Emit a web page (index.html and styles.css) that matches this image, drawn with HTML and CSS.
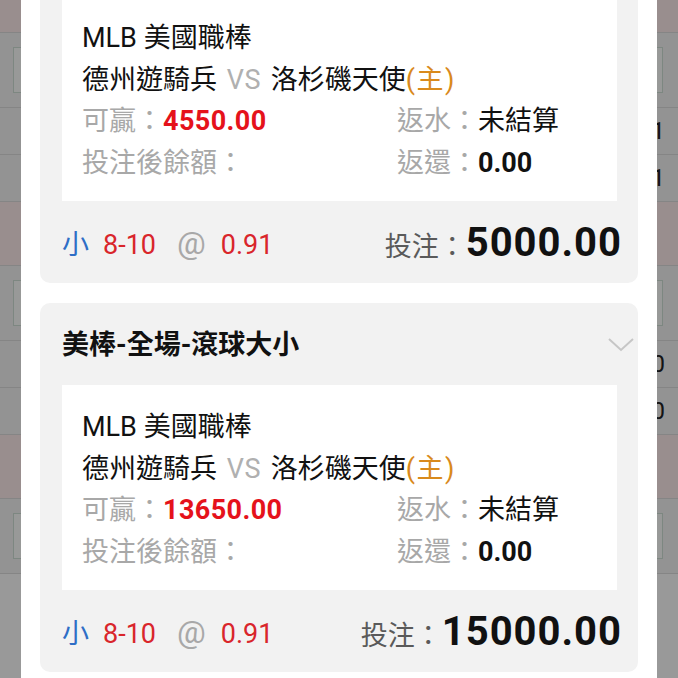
FILE: index.html
```html
<!DOCTYPE html>
<html lang="zh-Hant">
<head>
<meta charset="UTF-8" />
<meta name="viewport" content="width=device-width, initial-scale=1" />
<title>注單明細</title>
<link rel="stylesheet" href="styles.css">
</head>
<body>
  <!-- page behind the dialog -->
  <div class="page">
    <div class="group">
      <div class="row row-title"></div>
      <div class="row row-input"><div class="input"></div></div>
      <div class="row row-num"><span>1</span></div>
      <div class="row row-num"><span>1</span></div>
    </div>
    <div class="group">
      <div class="row row-title"></div>
      <div class="row row-input"><div class="input"></div></div>
      <div class="row row-num"><span>0</span></div>
      <div class="row row-num"><span>0</span></div>
    </div>
    <div class="group">
      <div class="row row-title"></div>
      <div class="row row-input"><div class="input"></div></div>
    </div>
  </div>

  <div class="mask"></div>

  <div class="dialog">
    <div class="bet-list">
      <section class="bet">
        <header class="bet-head">
          <span>美棒-全場-滾球大小</span>
          <svg class="chevron" width="26" height="14" viewBox="0 0 26 14"><path d="M1 1 L13 12 L25 1" fill="none" stroke="#c6c6c6" stroke-width="2"/></svg>
        </header>
        <div class="bet-body">
          <div>MLB 美國職棒</div>
          <div>德州遊騎兵 <span class="vs">VS</span> 洛杉磯天使<span class="home">(主)</span></div>
          <div class="stats">
            <div><span class="lbl">可贏：</span><b class="win">4550.00</b></div>
            <div><span class="lbl">返水：</span><span>未結算</span></div>
            <div><span class="lbl">投注後餘額：</span></div>
            <div><span class="lbl">返還：</span><b>0.00</b></div>
          </div>
        </div>
        <footer class="bet-foot">
          <div class="pick"><span class="side">小</span><span class="red handicap">8-10</span><span class="at">@</span><span class="red">0.91</span></div>
          <div class="stake"><span class="stake-lbl">投注：</span><b>5000.00</b></div>
        </footer>
      </section>

      <section class="bet">
        <header class="bet-head">
          <span>美棒-全場-滾球大小</span>
          <svg class="chevron" width="26" height="14" viewBox="0 0 26 14"><path d="M1 1 L13 12 L25 1" fill="none" stroke="#c6c6c6" stroke-width="2"/></svg>
        </header>
        <div class="bet-body">
          <div>MLB 美國職棒</div>
          <div>德州遊騎兵 <span class="vs">VS</span> 洛杉磯天使<span class="home">(主)</span></div>
          <div class="stats">
            <div><span class="lbl">可贏：</span><b class="win">13650.00</b></div>
            <div><span class="lbl">返水：</span><span>未結算</span></div>
            <div><span class="lbl">投注後餘額：</span></div>
            <div><span class="lbl">返還：</span><b>0.00</b></div>
          </div>
        </div>
        <footer class="bet-foot">
          <div class="pick"><span class="side">小</span><span class="red handicap">8-10</span><span class="at">@</span><span class="red">0.91</span></div>
          <div class="stake"><span class="stake-lbl">投注：</span><b>15000.00</b></div>
        </footer>
      </section>
    </div>
  </div>
</body>
</html>
```

FILE: styles.css
```css
body {
  margin: 0;
  font-family: Roboto, "Noto Sans CJK TC", sans-serif;
  color: #111;
  overflow: hidden;
  height: 678px;
}

/* background page */
.page {
  margin-top: -31px;
}
.row {
  border-bottom: 1px solid #dedede;
  background: #f5f5f5;
  display: flex;
  align-items: center;
}
.row-title {
  height: 63px;
  background: #ffeded;
}
.row-input {
  height: 74px;
}
.input {
  margin: 0 15px 0 13px;
  height: 44px;
  flex: 1;
  border: 1px solid #d0e2d8;
  background: #fdfffe;
}
.row-num {
  height: 46px;
  justify-content: flex-end;
  padding-right: 13px;
  font-size: 24px;
  color: #222;
}

.mask {
  position: fixed;
  inset: 0;
  background: rgba(0,0,0,0.4);
}

/* dialog */
.dialog {
  position: fixed;
  top: 0;
  bottom: 0;
  left: 21px;
  width: 636px;
  background: #fff;
  overflow: hidden;
}
.bet-list {
  margin-top: -86px;
  padding: 0 19px 0 19px;
  display: flex;
  flex-direction: column;
  gap: 20px;
}
.bet {
  background: #f2f2f2;
  border-radius: 10px;
  font-size: 27px;
}
.bet-head {
  height: 82px;
  display: flex;
  align-items: center;
  justify-content: space-between;
  padding: 0 4px 0 22px;
  font-weight: 700;
}
.bet-head span {
  margin-top: -3px;
}
.chevron {
  display: block;
  margin-top: 2px;
}
.bet-body {
  margin: 0 21px 0 22px;
  background: #fff;
  padding: 22px 20px 17px;
  line-height: 41.5px;
}
.vs {
  color: #b0b0b0;
  margin: 0 3px;
  letter-spacing: 0.5px;
}
.home {
  color: #d98a1c;
  letter-spacing: 1.5px;
}
.stats {
  display: grid;
  grid-template-columns: 315px 1fr;
}
.lbl {
  color: #a8a8a8;
}
.win {
  color: #e5121b;
  letter-spacing: 0.4px;
}
.bet-foot {
  height: 82px;
  display: flex;
  align-items: center;
  justify-content: space-between;
  padding: 0 16px 0 22px;
}
.pick {
  display: flex;
  align-items: baseline;
}
.side {
  color: #2e6ec6;
  margin-right: 14px;
}
.red {
  color: #d9252b;
}
.handicap {
  margin-right: 21px;
}
.at {
  color: #a8a8a8;
  font-size: 32px;
  margin-right: 15px;
}
.stake {
  display: flex;
  align-items: baseline;
}
.stake-lbl {
  color: #5a5a5a;
}
.stake b {
  font-size: 40px;
  letter-spacing: 1px;
}
```
